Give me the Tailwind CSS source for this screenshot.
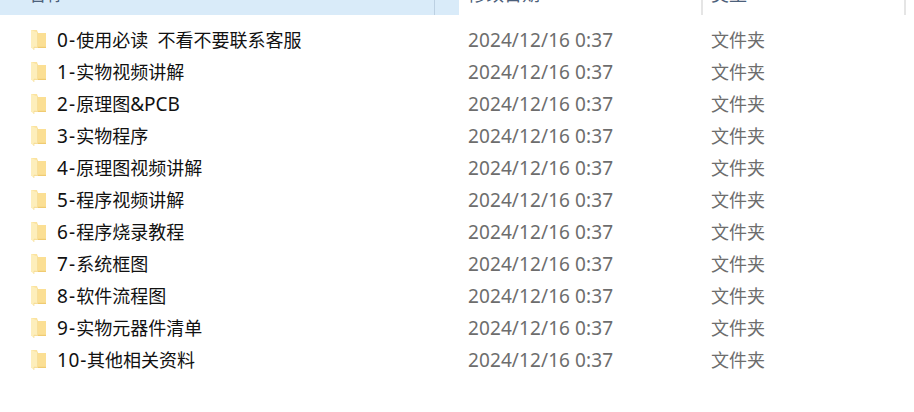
<!DOCTYPE html>
<html lang="zh-CN">
<head>
<meta charset="UTF-8">
<title>文件列表</title>
<script src="https://cdn.jsdelivr.net/npm/@tailwindcss/browser@4"></script>
</head>
<body class="bg-white w-[914px] h-[412px] overflow-hidden font-['Noto_Sans','Noto_Sans_CJK_SC',sans-serif] text-[18px]">

<svg class="hidden">
  <symbol id="folder" viewBox="0 0 15 20">
    <path d="M7 3H15V18H7Z" fill="#fbdf94"/>
    <path d="M0 0H6L7 3V18H0Z" fill="#fbe39f"/>
    <path d="M0 0L6.5 2.5V17.5L3 17V20L0 17.5Z" fill="#fdeebb"/>
    <path d="M6.5 2.5V17.5L3 17V20" fill="none" stroke="#f4d98e" stroke-width=".6"/>
    <path d="M7 16.8H15V18H7Z" fill="#f0cb72"/>
  </symbol>
</svg>

<div class="flex h-[15px] overflow-hidden text-[#4c607a] leading-[24px]">
  <div class="w-[434px] bg-[#d9ebf9] pl-[28px] -mt-[18px] h-[33px]">名称</div>
  <div class="w-[25px] bg-[#d9ebf9] border-l border-[#bcd0e2]"></div>
  <div class="w-[242px] pl-[9px] -mt-[18px] h-[33px]">修改日期</div>
  <div class="w-[203px] border-l-2 border-[#e5e5e5] pl-[8px] -mt-[18px] h-[33px]"><span>类型</span></div>
  <div class="w-[2px] bg-[#e5e5e5]"></div>
</div>

<div class="pt-[9px] flex flex-col">
  <div class="flex items-center h-[32px]"><svg class="ml-[31px] w-[15px] h-[20px]"><use href="#folder"/></svg><span class="ml-[11px] w-[411px] text-[#111]"><span class="text-[19px] tracking-[1.1px]">0-</span>使用必读&nbsp;&nbsp;不看不要联系客服</span><span class="w-[243px] text-[#6d6d6d] text-[19px] tracking-[.1px]">2024/12/16 0:37</span><span class="text-[#6d6d6d]">文件夹</span></div>
  <div class="flex items-center h-[32px]"><svg class="ml-[31px] w-[15px] h-[20px]"><use href="#folder"/></svg><span class="ml-[11px] w-[411px] text-[#111]"><span class="text-[19px] tracking-[1.1px]">1-</span>实物视频讲解</span><span class="w-[243px] text-[#6d6d6d] text-[19px] tracking-[.1px]">2024/12/16 0:37</span><span class="text-[#6d6d6d]">文件夹</span></div>
  <div class="flex items-center h-[32px]"><svg class="ml-[31px] w-[15px] h-[20px]"><use href="#folder"/></svg><span class="ml-[11px] w-[411px] text-[#111]"><span class="text-[19px] tracking-[1.1px]">2-</span>原理图<span class="text-[19px]">&amp;PCB</span></span><span class="w-[243px] text-[#6d6d6d] text-[19px] tracking-[.1px]">2024/12/16 0:37</span><span class="text-[#6d6d6d]">文件夹</span></div>
  <div class="flex items-center h-[32px]"><svg class="ml-[31px] w-[15px] h-[20px]"><use href="#folder"/></svg><span class="ml-[11px] w-[411px] text-[#111]"><span class="text-[19px] tracking-[1.1px]">3-</span>实物程序</span><span class="w-[243px] text-[#6d6d6d] text-[19px] tracking-[.1px]">2024/12/16 0:37</span><span class="text-[#6d6d6d]">文件夹</span></div>
  <div class="flex items-center h-[32px]"><svg class="ml-[31px] w-[15px] h-[20px]"><use href="#folder"/></svg><span class="ml-[11px] w-[411px] text-[#111]"><span class="text-[19px] tracking-[1.1px]">4-</span>原理图视频讲解</span><span class="w-[243px] text-[#6d6d6d] text-[19px] tracking-[.1px]">2024/12/16 0:37</span><span class="text-[#6d6d6d]">文件夹</span></div>
  <div class="flex items-center h-[32px]"><svg class="ml-[31px] w-[15px] h-[20px]"><use href="#folder"/></svg><span class="ml-[11px] w-[411px] text-[#111]"><span class="text-[19px] tracking-[1.1px]">5-</span>程序视频讲解</span><span class="w-[243px] text-[#6d6d6d] text-[19px] tracking-[.1px]">2024/12/16 0:37</span><span class="text-[#6d6d6d]">文件夹</span></div>
  <div class="flex items-center h-[32px]"><svg class="ml-[31px] w-[15px] h-[20px]"><use href="#folder"/></svg><span class="ml-[11px] w-[411px] text-[#111]"><span class="text-[19px] tracking-[1.1px]">6-</span>程序烧录教程</span><span class="w-[243px] text-[#6d6d6d] text-[19px] tracking-[.1px]">2024/12/16 0:37</span><span class="text-[#6d6d6d]">文件夹</span></div>
  <div class="flex items-center h-[32px]"><svg class="ml-[31px] w-[15px] h-[20px]"><use href="#folder"/></svg><span class="ml-[11px] w-[411px] text-[#111]"><span class="text-[19px] tracking-[1.1px]">7-</span>系统框图</span><span class="w-[243px] text-[#6d6d6d] text-[19px] tracking-[.1px]">2024/12/16 0:37</span><span class="text-[#6d6d6d]">文件夹</span></div>
  <div class="flex items-center h-[32px]"><svg class="ml-[31px] w-[15px] h-[20px]"><use href="#folder"/></svg><span class="ml-[11px] w-[411px] text-[#111]"><span class="text-[19px] tracking-[1.1px]">8-</span>软件流程图</span><span class="w-[243px] text-[#6d6d6d] text-[19px] tracking-[.1px]">2024/12/16 0:37</span><span class="text-[#6d6d6d]">文件夹</span></div>
  <div class="flex items-center h-[32px]"><svg class="ml-[31px] w-[15px] h-[20px]"><use href="#folder"/></svg><span class="ml-[11px] w-[411px] text-[#111]"><span class="text-[19px] tracking-[1.1px]">9-</span>实物元器件清单</span><span class="w-[243px] text-[#6d6d6d] text-[19px] tracking-[.1px]">2024/12/16 0:37</span><span class="text-[#6d6d6d]">文件夹</span></div>
  <div class="flex items-center h-[32px]"><svg class="ml-[31px] w-[15px] h-[20px]"><use href="#folder"/></svg><span class="ml-[11px] w-[411px] text-[#111]"><span class="text-[19px] tracking-[.7px]">10-</span>其他相关资料</span><span class="w-[243px] text-[#6d6d6d] text-[19px] tracking-[.1px]">2024/12/16 0:37</span><span class="text-[#6d6d6d]">文件夹</span></div>
</div>
</body>
</html>
